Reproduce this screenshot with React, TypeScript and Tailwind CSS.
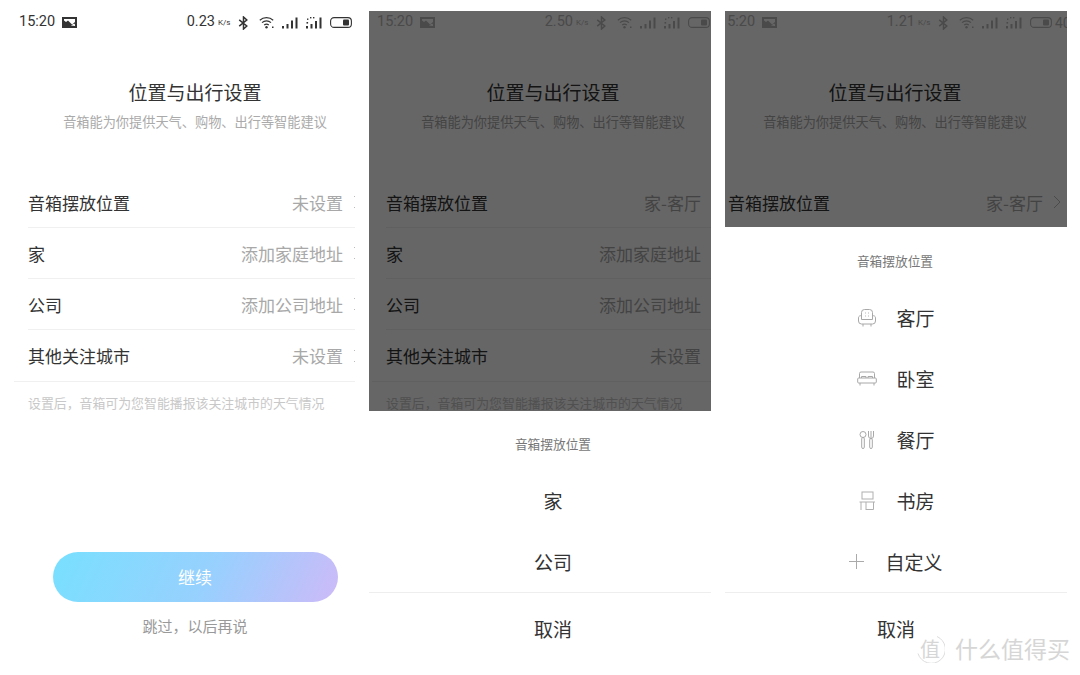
const cjk = "font-['Noto_Sans_CJK_SC','Noto_Sans',sans-serif]";

function ImageIcon() {
  return (
    <svg width="15" height="11" viewBox="0 0 15 11" className="shrink-0">
      <rect x="0.5" y="0.5" width="14" height="10" fill="currentColor" stroke="currentColor" />
      <path d="M2 2h11v3L10 7.5 6 3.5 4 5 2 3.5z" fill="#fff" />
      <path d="M9 8.5l3-2 1 1v1.5z" fill="#fff" />
    </svg>
  );
}
function Bluetooth() {
  return (
    <svg width="11" height="14" viewBox="0 0 11 14" fill="none" stroke="currentColor" strokeWidth="1.5" className="shrink-0">
      <path d="M1.2 3.8l7.6 6.2L5.5 13V1l3.3 3L1.2 10.2" />
    </svg>
  );
}
function Wifi() {
  return (
    <svg width="15" height="13" viewBox="0 0 15 13" fill="none" stroke="currentColor" strokeWidth="1.2" className="shrink-0">
      <path d="M0.8 4.2C4.5 0.8 10.5 0.8 14.2 4.2" />
      <path d="M3 6.6C5.5 4.4 9.5 4.4 12 6.6" />
      <path d="M5.2 9C6.5 7.9 8.5 7.9 9.8 9" />
      <circle cx="7.5" cy="11.3" r="1.2" fill="currentColor" stroke="none" />
      <rect x="13" y="10.5" width="1.5" height="1.5" fill="currentColor" stroke="none" />
    </svg>
  );
}
function Signal({ tag }: { tag?: boolean }) {
  return (
    <svg width="16" height="13" viewBox="0 0 16 13" fill="currentColor" className="shrink-0">
      <rect x="0" y="10" width="2" height="2.5" />
      <rect x="4.5" y="8" width="2" height="4.5" />
      <rect x="9" y={tag ? 5 : 4.5} width="2" height={tag ? 7.5 : 8} />
      <rect x="13.5" y="1.5" width="2" height="11" />
      {tag ? (
        <>
          <rect x="1" y="2.5" width="1.4" height="1.4" />
          <rect x="4" y="1" width="1.4" height="1.4" />
          <rect x="7" y="1" width="1.4" height="1.4" />
          <rect x="0.5" y="6" width="1.6" height="1.6" />
        </>
      ) : null}
    </svg>
  );
}
function Battery() {
  return (
    <svg width="22" height="11" viewBox="0 0 22 11" fill="none" className="shrink-0">
      <rect x="0.6" y="0.6" width="20.8" height="9.8" rx="3.5" stroke="currentColor" strokeWidth="1.1" />
      <rect x="13" y="2.6" width="6" height="5.8" rx="1" fill="currentColor" />
    </svg>
  );
}

function StatusBar({ speed, dim }: { speed: string; dim: boolean }) {
  const color = dim ? "text-[#b8b8b8]" : "text-[#333333]";
  return (
    <div className={`flex h-[23px] items-center pl-[5px] font-['Roboto',sans-serif] ${color}`}>
      <span className="w-[43px] text-[14.5px] leading-none">15:20</span>
      <ImageIcon />
      <div className="flex-1" />
      <span className="text-[14.5px] leading-none">{speed}</span>
      <span className="ml-[3px] w-[14px] text-[8px] leading-none">K/s</span>
      <span className="ml-[7px] flex w-[9px] justify-center"><Bluetooth /></span>
      <span className="ml-[11px]"><Wifi /></span>
      <span className="ml-[8px]"><Signal /></span>
      <span className="ml-[8px]"><Signal tag /></span>
      <span className="ml-[8px]"><Battery /></span>
      <span className="w-[24px] whitespace-nowrap pl-[3px] text-[14px] leading-none">40%</span>
    </div>
  );
}

function Row({ label, value, last }: { label: string; value: string; last?: boolean }) {
  return (
    <div className={`ml-[14px] flex h-[51px] items-center ${last ? "" : "border-b border-[#f0f0f0]"}`}>
      <span className="flex-1 text-[17px] leading-none text-[#333333]">{label}</span>
      <span className="text-[17px] leading-none text-[#a8a8a8]">{value}</span>
      <span className="flex w-[33px] justify-end pr-[15px]">
        <svg width="8" height="14" viewBox="0 0 8 14" fill="none" stroke="#bbbbbb" strokeWidth="1"><path d="M1 1l6 6-6 6" /></svg>
      </span>
    </div>
  );
}

function BaseScreen({ speed, dim, offset, location }: { speed: string; dim: boolean; offset: string; location: string }) {
  return (
    <div className={`w-[362px] shrink-0 ${offset} ${cjk}`}>
      <StatusBar speed={speed} dim={dim} />
      <div className="mt-[43px] h-[30px] text-center text-[19px] leading-[30px] text-[#333333]">位置与出行设置</div>
      <div className="mt-[5px] h-[20px] text-center text-[13.2px] leading-[20px] text-[#aaaaaa]">音箱能为你提供天气、购物、出行等智能建议</div>
      <div className="mt-[45px] border-b border-[#f0f0f0]">
        <Row label="音箱摆放位置" value={location} />
        <Row label="家" value="添加家庭地址" />
        <Row label="公司" value="添加公司地址" />
        <Row label="其他关注城市" value="未设置" last />
      </div>
      <div className="mt-[11px] h-[20px] pl-[14px] text-[12.9px] leading-[20px] text-[#c8c8c8]">设置后，音箱可为您智能播报该关注城市的天气情况</div>
      <div className="mx-auto mt-[139px] flex h-[50px] w-[285px] items-center justify-center rounded-full bg-[linear-gradient(115deg,#78e0ff_0%,#98d0fe_55%,#cdbaf8_100%)] text-[17px] text-white">继续</div>
      <div className="mt-[14px] h-[20px] text-center text-[15px] leading-[20px] text-[#999999]">跳过，以后再说</div>
    </div>
  );
}

const iconClass = "h-[20px] w-[20px] shrink-0";
function Armchair() {
  return (
    <svg viewBox="0 0 20 20" fill="none" stroke="#a8a8a8" strokeWidth="1" className={iconClass}>
      <path d="M4.5 8V4.5a3 3 0 0 1 3-3h5a3 3 0 0 1 3 3V8" />
      <path d="M4.5 8a2 2 0 0 0-3 1.800V13a3 3 0 0 0 3 3h11a3 3 0 0 0 3-3V9.800a2 2 0 0 0-3-1.800v3.500h-11z" />
      <path d="M6 16v2.500M14 16v2.500" />
      <path d="M8 5h.8M11.200 5h.8M8 8h.8M11.200 8h.8" />
    </svg>
  );
}
function Bed() {
  return (
    <svg viewBox="0 0 20 20" fill="none" stroke="#a8a8a8" strokeWidth="1" className={iconClass}>
      <path d="M2.500 9V4.500a1.500 1.500 0 0 1 1.500-1.500h12a1.500 1.500 0 0 1 1.500 1.500V9" />
      <path d="M4.500 9V7.500h4.500V9M11 9V7.500h4.500V9" />
      <rect x="0.700" y="9" width="18.600" height="5" rx="1" />
      <path d="M3 14v2.500M17 14v2.500" />
    </svg>
  );
}
function Cutlery() {
  return (
    <svg viewBox="0 0 20 20" fill="none" stroke="#a8a8a8" strokeWidth="1" className={iconClass}>
      <circle cx="6" cy="4.500" r="3" />
      <rect x="4.700" y="7.500" width="2.600" height="11" rx="1.300" />
      <path d="M11.500 1v5a2.500 2.500 0 0 0 5 0V1M14 1v7" />
      <rect x="12.700" y="8.500" width="2.600" height="10" rx="1.300" />
    </svg>
  );
}
function Desk() {
  return (
    <svg viewBox="0 0 20 20" fill="none" stroke="#b0b0b0" strokeWidth="1" className={iconClass}>
      <rect x="5" y="1" width="11" height="7" />
      <path d="M2.500 11h15.500M4 11v8M9 11v8M9 18.500h7.500V11" />
    </svg>
  );
}
function Plus() {
  return (
    <svg width="15" height="15" viewBox="0 0 15 15" stroke="#aaaaaa" strokeWidth="1" className="shrink-0">
      <path d="M7.500 0v15M0 7.500h15" />
    </svg>
  );
}

function SheetItem({ children }: { children: React.ReactNode }) {
  return <div className="flex h-[61px] items-center justify-center text-[19px] leading-none text-[#333333]">{children}</div>;
}

export default function App() {
  return (
    <div className="relative flex h-[675px] w-[1080px] gap-[14px] overflow-hidden bg-white pl-[13px] pt-[11px]">
      <div className="relative h-[653px] w-[342px] shrink-0 overflow-hidden">
        <BaseScreen speed="0.23" dim={false} offset="ml-[1px]" location="未设置" />
      </div>

      <div className="relative h-[653px] w-[342px] shrink-0 overflow-hidden">
        <BaseScreen speed="2.50" dim offset="ml-[3px]" location="家-客厅" />
        <div className={`absolute inset-0 flex flex-col ${cjk}`}>
          <div className="flex-1 bg-black/60" />
          <div className="bg-white">
            <div className="mb-[16px] h-[20px] pl-[26px] pt-0 text-center text-[12.700px] leading-[20px] text-[#777777] mt-[23px]">音箱摆放位置</div>
            <div className="pl-[26px]">
              <SheetItem>家</SheetItem>
              <SheetItem>公司</SheetItem>
            </div>
            <div className="flex h-[72px] items-center justify-center border-t border-[#eeeeee] pl-[26px] text-[19px] leading-none text-[#333333]">取消</div>
          </div>
        </div>
      </div>

      <div className="relative h-[653px] w-[342px] shrink-0 overflow-hidden">
        <BaseScreen speed="1.21" dim offset="-ml-[11px]" location="家-客厅" />
        <div className={`absolute inset-0 flex flex-col ${cjk}`}>
          <div className="flex-1 bg-black/60" />
          <div className="bg-white">
            <div className="mb-[16px] mt-[24px] h-[20px] pr-[2px] text-center text-[12.700px] leading-[20px] text-[#777777]">音箱摆放位置</div>
            <SheetItem><Armchair /><span className="ml-[19px]">客厅</span></SheetItem>
            <SheetItem><Bed /><span className="ml-[19px]">卧室</span></SheetItem>
            <SheetItem><Cutlery /><span className="ml-[19px]">餐厅</span></SheetItem>
            <SheetItem><Desk /><span className="ml-[19px]">书房</span></SheetItem>
            <SheetItem><Plus /><span className="ml-[21px]">自定义</span></SheetItem>
            <div className="flex h-[72px] items-center justify-center border-t border-[#eeeeee] text-[19px] leading-none text-[#333333]">取消</div>
          </div>
        </div>
      </div>

      <div className={`absolute bottom-[12px] right-[10px] flex items-center gap-[10px] text-[#d6d6d6] ${cjk}`}>
        <div className="relative flex h-[29px] w-[30px] items-center justify-center text-[20px] leading-none">
          <svg viewBox="0 0 30 29" fill="none" stroke="#dddddd" strokeWidth="1" className="absolute inset-0">
            <path d="M22 2.500a14 14 0 1 1-19 17" />
          </svg>
          <span className="relative">值</span>
        </div>
        <span className="text-[23px] leading-none">什么值得买</span>
      </div>
    </div>
  );
}
